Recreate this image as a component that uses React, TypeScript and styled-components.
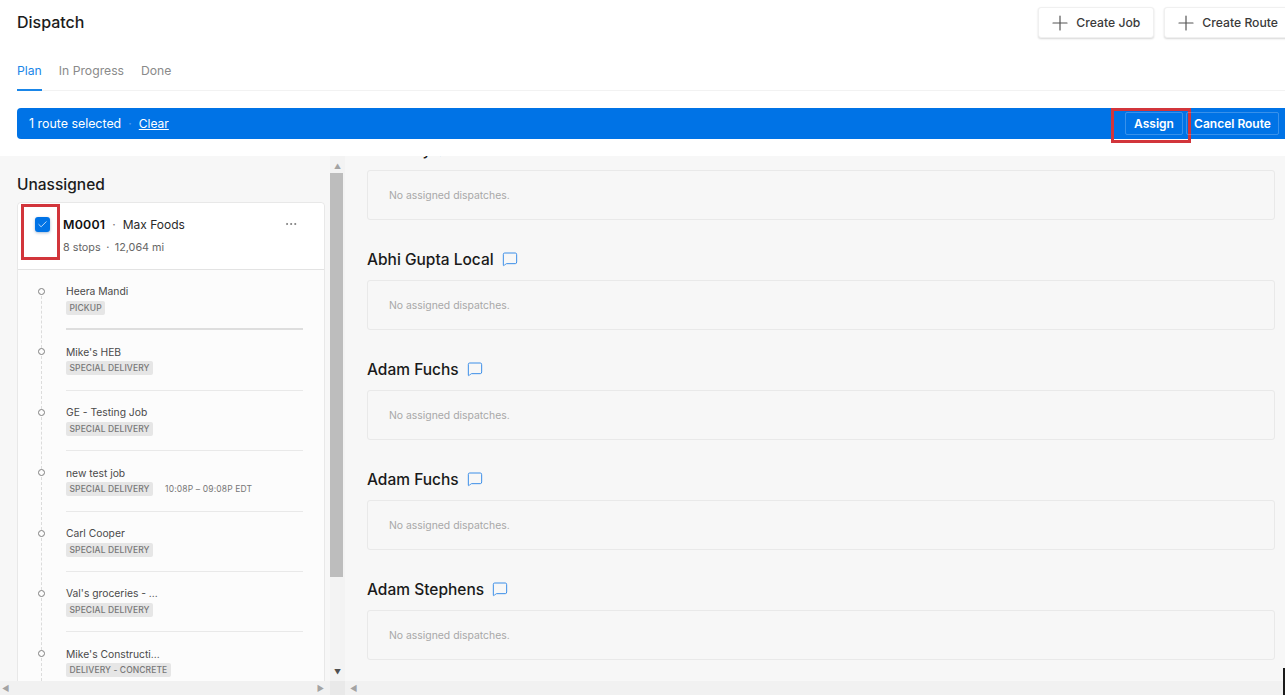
import { Check, Ellipsis, MessageSquare, Plus } from "lucide-react";
import styled, { createGlobalStyle } from "styled-components";

/* ---------------------------------------------
   Data
--------------------------------------------- */
type Stop = { name: string; tag: string; time?: string };

const STOPS: Stop[] = [
  { name: "Heera Mandi", tag: "PICKUP" },
  { name: "Mike's HEB", tag: "SPECIAL DELIVERY" },
  { name: "GE - Testing Job", tag: "SPECIAL DELIVERY" },
  { name: "new test job", tag: "SPECIAL DELIVERY", time: "10:08P – 09:08P EDT" },
  { name: "Carl Cooper", tag: "SPECIAL DELIVERY" },
  { name: "Val's groceries - ...", tag: "SPECIAL DELIVERY" },
  { name: "Mike's Constructi...", tag: "DELIVERY - CONCRETE" },
];

const DRIVERS = ["Abhi Jay", "Abhi Gupta Local", "Adam Fuchs", "Adam Fuchs", "Adam Stephens"];

/* ---------------------------------------------
   Styled Components
--------------------------------------------- */
const GlobalStyle = createGlobalStyle`
  html, body {
    margin: 0;
    height: 100%;
    overflow: hidden;
    background: #ffffff;
  }
  * {
    box-sizing: border-box;
  }
`;

const Page = styled.div`
  height: 100vh;
  display: flex;
  flex-direction: column;
  overflow: hidden;
  font-family: Inter, "Liberation Sans", sans-serif;
  color: #1c1c1c;
  position: relative;
`;

const TopBar = styled.header`
  height: 46px;
  flex: none;
  padding: 7px 0 0 17px;
  display: flex;
  justify-content: space-between;
  align-items: flex-start;
`;

const Title = styled.h1`
  margin: 5px 0 0;
  font-size: 16px;
  line-height: 20px;
  font-weight: 500;
`;

const Actions = styled.div`
  display: flex;
  gap: 10px;
  margin-right: -7px;
`;

const CreateButton = styled.button`
  height: 31px;
  padding: 0 13px 0 9px;
  display: flex;
  align-items: center;
  gap: 4px;
  background: #ffffff;
  border: 1px solid #f0f0f0;
  border-radius: 3px;
  box-shadow: 0 1px 2px rgba(0, 0, 0, 0.16);
  font: 500 12.2px Inter, sans-serif;
  color: #3a3a3a;
  white-space: nowrap;

  svg {
    color: #555555;
  }
`;

const Tabs = styled.nav`
  height: 45px;
  flex: none;
  margin-left: 17px;
  display: flex;
  gap: 17px;
  align-items: flex-end;
  border-bottom: 1px solid #f2f2f2;
`;

const Tab = styled.div<{ $active?: boolean }>`
  height: 36px;
  padding-top: 8px;
  font-size: 12.2px;
  line-height: 16px;
  color: ${(p) => (p.$active ? "#1a86e8" : "#8a8a8a")};
  border-bottom: 2px solid ${(p) => (p.$active ? "#1a86e8" : "transparent")};
  margin-bottom: -1px;
`;

const Banner = styled.div`
  height: 31px;
  flex: none;
  margin: 17px 0 17px 17px;
  padding: 0 6px 0 12px;
  background: #0073e6;
  border-radius: 4px 0 0 4px;
  display: flex;
  align-items: center;
  color: #ffffff;
  font-size: 12.4px;
`;

const BannerDot = styled.span`
  margin: 0 7px;
  opacity: 0.3;
`;

const ClearLink = styled.a`
  color: #ffffff;
  font-size: 12px;
  text-decoration: underline;
`;

const BannerActions = styled.div`
  margin-left: auto;
  display: flex;
  gap: 3px;
`;

const BannerButton = styled.button<{ $width: number }>`
  position: relative;
  width: ${(p) => p.$width}px;
  height: 23px;
  padding: 0;
  background: transparent;
  border: 1px solid rgba(255, 255, 255, 0.22);
  border-radius: 2px;
  color: #ffffff;
  font: 600 12px Inter, sans-serif;
  white-space: nowrap;
`;

const AssignHighlight = styled.span`
  position: absolute;
  left: -15px;
  top: -5px;
  width: 80px;
  height: 35px;
  border: 3px solid #d2353b;
`;

const Workspace = styled.main`
  flex: 1;
  min-height: 0;
  display: grid;
  grid-template-columns: 345px 1fr;
  background: #f7f7f7;
`;

const Pane = styled.section`
  min-width: 0;
  min-height: 0;
  display: grid;
  grid-template-rows: 1fr 14px;
`;

const LeftBody = styled.div`
  min-height: 0;
  display: grid;
  grid-template-columns: 330px 15px;
`;

const LeftScroll = styled.div`
  overflow: hidden;
  padding: 20px 5px 0 17px;
`;

const SectionTitle = styled.h2`
  margin: 0 0 8px;
  font-size: 15.5px;
  line-height: 18px;
  font-weight: 500;
`;

const RouteCard = styled.article`
  border: 1px solid #e8e8e8;
  border-radius: 4px 4px 0 0;
  background: #fcfcfc;
`;

const RouteHeader = styled.div`
  position: relative;
  height: 67px;
  padding: 12px 0 0 45px;
  background: #ffffff;
  border-bottom: 1px solid #e3e3e3;
  border-radius: 4px 4px 0 0;
`;

const CheckBox = styled.span`
  position: absolute;
  left: 17px;
  top: 14px;
  width: 15px;
  height: 15px;
  border-radius: 3px;
  background: #0073e6;
  box-shadow: 0 1px 3px rgba(0, 60, 130, 0.35);
  display: flex;
  align-items: center;
  justify-content: center;
  color: #e2effc;
`;

const CheckHighlight = styled.span`
  position: absolute;
  left: 3px;
  top: 1px;
  width: 39px;
  height: 56px;
  border: 3px solid #d2353b;
`;

const RouteTitle = styled.div`
  display: flex;
  align-items: center;
  height: 18px;
  font-size: 12px;
  color: #2a2a2a;
`;

const RouteCode = styled.strong`
  font-size: 12.4px;
  font-weight: 600;
  color: #111111;
  letter-spacing: 0.2px;
`;

const Dot = styled.span`
  margin: 0 7px;
  color: #777777;
`;

const MoreButton = styled.span`
  margin-left: auto;
  margin-right: 26px;
  display: flex;
  color: #555555;
`;

const RouteMeta = styled.div`
  margin-top: 8px;
  font-size: 10.8px;
  line-height: 14px;
  color: #666666;
`;

const MetaDot = styled.span`
  margin: 0 5.5px;
`;

const StopList = styled.ol`
  margin: 0;
  padding: 0;
  list-style: none;
  height: 412px;
  overflow: hidden;
`;

const StopRow = styled.li`
  position: relative;
  height: 60.4px;
  padding: 14.4px 21px 0 48px;
`;

const StopMarker = styled.span`
  position: absolute;
  left: 20px;
  top: 18px;
  width: 7px;
  height: 7px;
  border: 1.5px solid #808080;
  border-radius: 50%;
  background: #fcfcfc;
`;

const StopConnector = styled.span`
  position: absolute;
  left: 23px;
  top: 26px;
  bottom: -18px;
  border-left: 1px dashed #dcdcdc;
`;

const StopBody = styled.div<{ $strong?: boolean }>`
  height: 46px;
  border-bottom: ${(p) => (p.$strong ? "2px solid #dedede" : "1px solid #e9e9e9")};
`;

const StopName = styled.div`
  font-size: 10.3px;
  line-height: 14px;
  color: #4a4a4a;
`;

const StopTags = styled.div`
  margin-top: 2.6px;
  display: flex;
  align-items: center;
  gap: 12px;
`;

const Tag = styled.span`
  height: 14px;
  padding: 0 3.5px;
  background: #e6e6e6;
  border-radius: 2px;
  font-size: 8.5px;
  line-height: 14px;
  font-weight: 500;
  letter-spacing: 0.1px;
  color: #777777;
`;

const StopTime = styled.span`
  font-size: 8.5px;
  color: #777777;
  letter-spacing: 0.15px;
`;

const VScrollbar = styled.div`
  display: flex;
  flex-direction: column;
  background: #f3f3f3;
`;

const ScrollArrow = styled.div<{ $dark?: boolean }>`
  height: 17px;
  flex: none;
  padding: ${(p) => (p.$dark ? "0" : "3px 0 0")};
  display: flex;
  align-items: center;
  justify-content: center;
  color: ${(p) => (p.$dark ? "#505050" : "#a3a3a3")};
  font-size: 7px;
  line-height: 1;
`;

const VTrack = styled.div`
  flex: 1;
  padding-right: 2px;
`;

const VThumb = styled.div`
  height: 404px;
  background: #bdbdbd;
`;

const HScrollbar = styled.div`
  display: flex;
  align-items: center;
  justify-content: space-between;
  padding: 0 6px 0 2px;
  background: #f1f1f1;
  color: #a3a3a3;
  font-size: 8px;
`;

const LeftFooter = styled.div`
  display: grid;
  grid-template-columns: 330px 15px;
`;

const ScrollCorner = styled.div`
  background: #e9e9e9;
`;

const RightScroll = styled.div`
  overflow: hidden;
  padding: 0 10px 0 22px;
`;

const DriverList = styled.div`
  margin-top: -18px;
`;

const DriverSection = styled.div`
  margin-bottom: 28px;
`;

const DriverHeading = styled.h3`
  margin: 0 0 10px;
  height: 22px;
  display: flex;
  align-items: center;
  gap: 8px;
  font-size: 15.5px;
  font-weight: 500;
  color: #1a1a1a;
`;

const CommentIcon = styled.span`
  display: flex;
  color: #3b8ee8;
`;

const EmptyBox = styled.div`
  height: 50px;
  padding-left: 21px;
  display: flex;
  align-items: center;
  border: 1px solid #e9e9e9;
  border-radius: 3px;
  font-size: 10.4px;
  color: #a8a8a8;
`;

const ArrowOnly = styled(HScrollbar)`
  padding-left: 5px;
`;

const EdgeMark = styled.span`
  position: absolute;
  right: 0;
  bottom: 0;
  width: 2px;
  height: 27px;
  background: #1a1a1a;
`;

/* ---------------------------------------------
   Component
--------------------------------------------- */
export default function App() {
  return (
    <Page>
      <GlobalStyle />
      <TopBar>
        <Title>Dispatch</Title>
        <Actions>
          <CreateButton>
            <Plus size={24} strokeWidth={1.2} />
            Create Job
          </CreateButton>
          <CreateButton>
            <Plus size={24} strokeWidth={1.2} />
            Create Route
          </CreateButton>
        </Actions>
      </TopBar>

      <Tabs>
        <Tab $active>Plan</Tab>
        <Tab>In Progress</Tab>
        <Tab>Done</Tab>
      </Tabs>

      <Banner>
        1 route selected
        <BannerDot>·</BannerDot>
        <ClearLink>Clear</ClearLink>
        <BannerActions>
          <BannerButton $width={58}>
            Assign
            <AssignHighlight />
          </BannerButton>
          <BannerButton $width={93}>Cancel Route</BannerButton>
        </BannerActions>
      </Banner>

      <Workspace>
        <Pane>
          <LeftBody>
            <LeftScroll>
              <SectionTitle>Unassigned</SectionTitle>
              <RouteCard>
                <RouteHeader>
                  <CheckHighlight />
                  <CheckBox>
                    <Check size={11} strokeWidth={1.8} />
                  </CheckBox>
                  <RouteTitle>
                    <RouteCode>M0001</RouteCode>
                    <Dot>·</Dot>
                    Max Foods
                    <MoreButton>
                      <Ellipsis size={14} strokeWidth={1.1} />
                    </MoreButton>
                  </RouteTitle>
                  <RouteMeta>
                    8 stops<MetaDot>·</MetaDot>12,064 mi
                  </RouteMeta>
                </RouteHeader>
                <StopList>
                  {STOPS.map((stop, i) => (
                    <StopRow key={stop.name}>
                      <StopConnector />
                      <StopMarker />
                      <StopBody $strong={i === 0}>
                        <StopName>{stop.name}</StopName>
                        <StopTags>
                          <Tag>{stop.tag}</Tag>
                          {stop.time && <StopTime>{stop.time}</StopTime>}
                        </StopTags>
                      </StopBody>
                    </StopRow>
                  ))}
                </StopList>
              </RouteCard>
            </LeftScroll>
            <VScrollbar>
              <ScrollArrow>▲</ScrollArrow>
              <VTrack>
                <VThumb />
              </VTrack>
              <ScrollArrow $dark>▼</ScrollArrow>
            </VScrollbar>
          </LeftBody>
          <LeftFooter>
            <HScrollbar>
              <span>◀</span>
              <span>▶</span>
            </HScrollbar>
            <ScrollCorner />
          </LeftFooter>
        </Pane>

        <Pane>
          <RightScroll>
            <DriverList>
              {DRIVERS.map((driver, i) => (
                <DriverSection key={`${driver}-${i}`}>
                  <DriverHeading>
                    {driver}
                    <CommentIcon>
                      <MessageSquare size={16} strokeWidth={1.5} />
                    </CommentIcon>
                  </DriverHeading>
                  <EmptyBox>No assigned dispatches.</EmptyBox>
                </DriverSection>
              ))}
            </DriverList>
          </RightScroll>
          <ArrowOnly>
            <span>◀</span>
          </ArrowOnly>
        </Pane>
      </Workspace>
      <EdgeMark />
    </Page>
  );
}
